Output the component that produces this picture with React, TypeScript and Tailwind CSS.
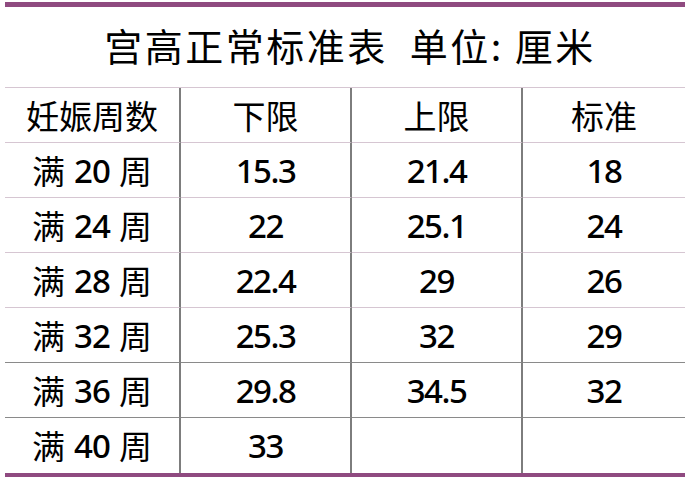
import React from "react";

const rows: [string, string, string, string, boolean][] = [
  ["20", "15.3", "21.4", "18", true],
  ["24", "22", "25.1", "24", true],
  ["28", "22.4", "29", "26", true],
  ["32", "25.3", "32", "29", false],
  ["36", "29.8", "34.5", "32", false],
  ["40", "33", "", "", false],
];

export default function App() {
  return (
    <div className="w-[685px] h-[479px] bg-white text-black flex flex-col pl-[5px] font-['Noto_Sans_CJK_SC',sans-serif]">
      <div className="mt-[2px] h-[5px] bg-[#8f4a80]" />
      <div className="h-[80px] pb-[5px] pl-[10px] flex items-center justify-center text-[38px] tracking-[2.5px] leading-none">
        宫高正常标准表&nbsp;&nbsp;单位: 厘米
      </div>
      <div className="grid grid-cols-[176px_171px_171px_162px] border-t border-[#d6c6d2]">
        {["妊娠周数", "下限", "上限", "标准"].map((h, i) => (
          <div
            key={h}
            className={
              i < 3
                ? "h-[55px] flex items-center justify-center text-[33px] leading-none border-b border-[#d6c6d2] border-r-2 border-r-[#7d7d7d]"
                : "h-[55px] flex items-center justify-center text-[33px] leading-none border-b border-[#d6c6d2]"
            }
          >
            {h}
          </div>
        ))}
        {rows.map(([w, a, b, c, pink], ri) => {
          const last = ri === rows.length - 1;
          const bb = last ? "" : pink ? "border-b border-[#d6c6d2]" : "border-b border-[#8a8a8a]";
          return (
            <React.Fragment key={w}>
              <div
                className={`h-[55px] flex items-center justify-center text-[33px] leading-none border-r-2 border-r-[#7d7d7d] ${bb}`}
              >
                <span>满</span>
                <span className="mx-[9px] tracking-[-1px] font-medium font-['Noto_Sans',sans-serif]">{w}</span>
                <span>周</span>
              </div>
              {[a, b, c].map((v, i) => (
                <div
                  key={i}
                  className={`h-[55px] flex items-center justify-center text-[33px] leading-none tracking-[-1.5px] font-medium font-['Noto_Sans',sans-serif] ${bb} ${
                    i < 2 ? "border-r-2 border-r-[#7d7d7d]" : ""
                  }`}
                >
                  {v}
                </div>
              ))}
            </React.Fragment>
          );
        })}
      </div>
      <div className="h-[4px] bg-[#8f4a80]" />
    </div>
  );
}
